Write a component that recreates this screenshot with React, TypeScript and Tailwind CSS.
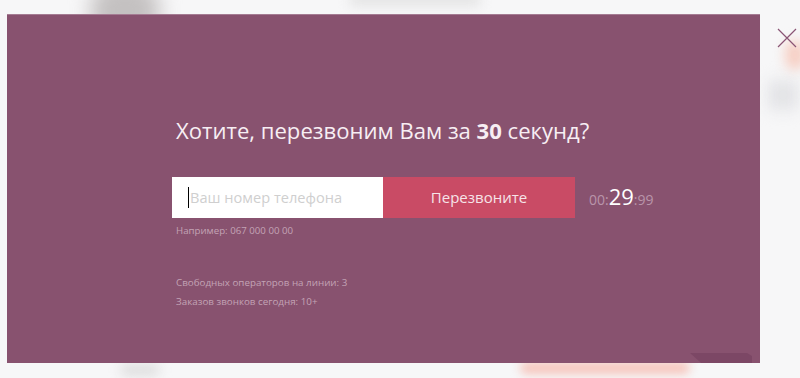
import React from 'react';

const font = { fontFamily: '"Open Sans", "Noto Sans", sans-serif' };

const Backdrop: React.FC = () => (
  <div className="absolute inset-0 overflow-hidden bg-[#f7f7f8]">
    <div className="absolute left-[90px] top-[-20px] w-[70px] h-[60px] rounded-full bg-[#c4c1c1] blur-[10px]" />
    <div className="absolute left-[350px] top-[-8px] w-[130px] h-[14px] bg-[#e4e4e4] blur-[6px]" />
    <div className="absolute left-[520px] top-[362px] w-[170px] h-[12px] rounded-full bg-[#f6c4bb] blur-[5px]" />
    <div className="absolute left-[120px] top-[364px] w-[40px] h-[12px] rounded-full bg-[#dddddd] blur-[6px]" />
    <div className="absolute left-[768px] top-[80px] w-[30px] h-[30px] bg-[#e2e3e6] blur-[8px]" />
    <div className="absolute left-[785px] top-[40px] w-[20px] h-[30px] rounded-full bg-[#f6cfc4] blur-[6px]" />
  </div>
);

const CloseIcon: React.FC = () => (
  <svg width="20" height="20" viewBox="0 0 20 20" className="mt-[14px] ml-[17px] shrink-0">
    <path d="M1 1 L19 19 M19 1 L1 19" stroke="#8a5575" strokeWidth="1.2" fill="none" />
  </svg>
);

export default function App() {
  return (
    <div className="relative w-[800px] h-[378px] overflow-hidden" style={font}>
      <Backdrop />
      <div className="relative flex pt-[14px] pl-[7px]">
        <div className="relative w-[753px] h-[349px] shrink-0 bg-[#88526f] border-t border-[#a57c93] pl-[169px] pt-[100px]">
          <div className="absolute right-[8px] bottom-0 w-[62px] h-[10px] bg-[#7c4765] [clip-path:polygon(0_0,92%_0,100%_30%,100%_100%,18%_100%)]" />
          <h2 className="text-[22.1px] leading-[30px] text-[#f7eef3] font-normal">
            Хотите, перезвоним Вам за <b className="font-bold">30</b> секунд?
          </h2>
          <div className="mt-[32px] flex items-center ml-[-4px]">
            <div className="w-[211px] h-[41px] bg-white flex items-center pl-[16px] gap-px">
              <span className="w-px h-[21px] bg-black shrink-0" />
              <input
                className="w-full bg-transparent outline-none text-[14.6px] text-[#333] placeholder:text-[#cfcfcf]"
                placeholder="Ваш номер телефона"
              />
            </div>
            <button className="w-[192px] h-[41px] bg-[#c94b65] text-[#f6e4e8] text-[15px]">
              Перезвоните
            </button>
            <div className="ml-[14px] flex items-baseline text-[#b995aa]">
              <span className="text-[14px]">00:</span>
              <span className="text-[22px] text-white leading-none">29</span>
              <span className="text-[14px]">:99</span>
            </div>
          </div>
          <p className="mt-[6px] text-[9.7px] leading-[13px] text-[#c3a3b5]">Например: 067 000 00 00</p>
          <div className="mt-[36px] text-[9.8px] leading-[19px] text-[#c3a3b5]">
            <p>Свободных операторов на линии: 3</p>
            <p>Заказов звонков сегодня: 10+</p>
          </div>
        </div>
        <CloseIcon />
      </div>
    </div>
  );
}
